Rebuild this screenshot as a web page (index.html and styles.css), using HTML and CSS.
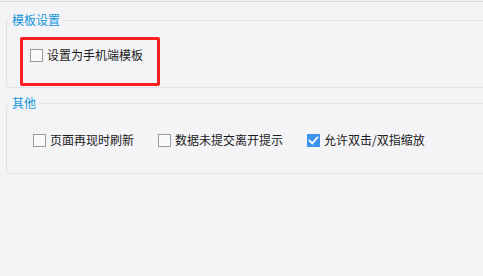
FILE: index.html
```html
<!DOCTYPE html>
<html lang="zh">
<head>
<meta charset="utf-8">
<link rel="stylesheet" href="styles.css">
</head>
<body>
<div class="topline"></div>
<fieldset class="panel panel-first">
  <legend class="panel-title">模板设置</legend>
  <div class="row row-first">
    <label class="check"><span class="box"></span><span class="label">设置为手机端模板</span></label>
  </div>
</fieldset>
<fieldset class="panel panel-second">
  <legend class="panel-title">其他</legend>
  <div class="row row-second">
    <label class="check"><span class="box"></span><span class="label">页面再现时刷新</span></label>
    <label class="check"><span class="box"></span><span class="label">数据未提交离开提示</span></label>
    <label class="check"><span class="box box-checked"><svg width="13" height="13" viewBox="0 0 13 13"><path d="M2.6 6.6 L5.2 9.3 L10.4 3.4" fill="none" stroke="#fff" stroke-width="1.8" stroke-linecap="square"/></svg></span><span class="label">允许双击/双指缩放</span></label>
  </div>
</fieldset>
<div class="highlight"></div>
</body>
</html>
```
FILE: styles.css
```css
html, body {
  margin: 0;
  padding: 0;
  background: #f4f4f6;
  overflow: hidden;
  height: 100%;
}
body {
  position: relative;
  padding-top: 1px;
  box-sizing: border-box;
  font-family: "Noto Sans CJK SC", "Noto Sans", sans-serif;
  font-size: 12px;
  color: #1a1a1a;
}
.topline {
  border-top: 1px solid #d8d8dc;
}
.panel {
  margin: 0 0 0 6px;
  padding: 0;
  border: 1px solid #e2e2e6;
  border-right: none;
  border-radius: 4px 0 0 4px;
  min-width: 0;
}
.panel-first { margin-top: 10px; padding-bottom: 1px; }
.panel-second { margin-top: 7px; }
.panel-title {
  margin-left: 2px;
  padding: 0 3px;
  font-size: 12px;
  line-height: 16px;
  color: #1296db;
}
.row {
  display: flex;
  align-items: center;
  gap: 24px;
  height: 16px;
}
.row-first { padding: 19px 0 23px 23px; }
.row-second { padding: 21px 0 25px 26px; }
.check {
  display: flex;
  align-items: center;
  gap: 4px;
  line-height: 16px;
}
.box {
  width: 13px;
  height: 13px;
  box-sizing: border-box;
  border: 1px solid #9a9a9a;
  background: #fafafa;
  display: block;
}
.box-checked {
  border: none;
  background: #3d94ee;
}
.box-checked svg { display: block; }
.highlight {
  position: absolute;
  left: 20px;
  top: 37px;
  width: 140px;
  height: 49px;
  box-sizing: border-box;
  border: 3px solid #ff1e1e;
  border-radius: 2px;
}
```
